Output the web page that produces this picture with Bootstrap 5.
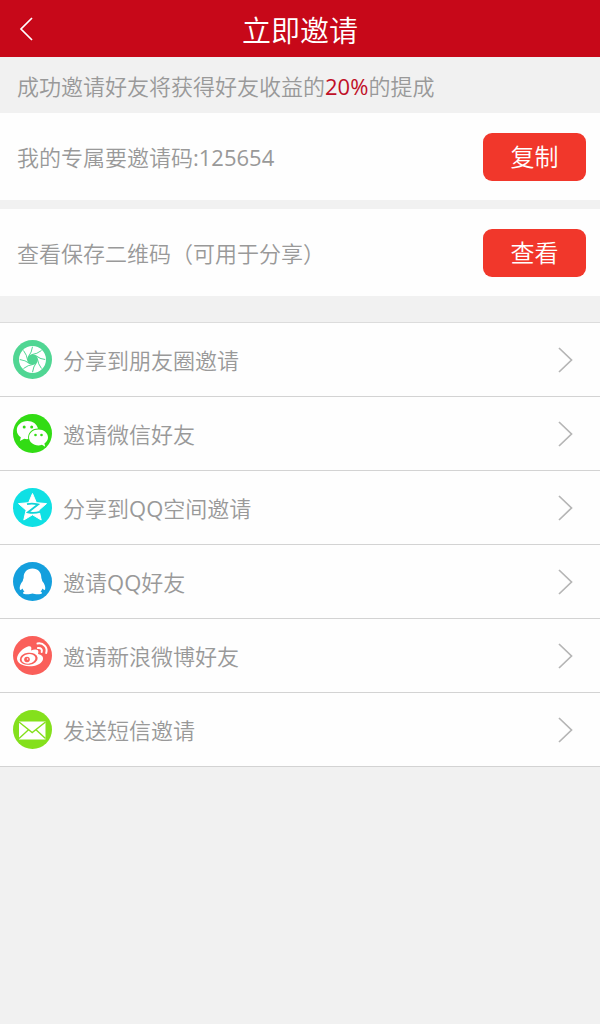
<!DOCTYPE html>
<html lang="zh-CN">
<head>
<meta charset="utf-8">
<meta name="viewport" content="width=device-width, initial-scale=1">
<title>立即邀请</title>
<link rel="stylesheet" href="https://cdn.jsdelivr.net/npm/bootstrap@5.3.0/dist/css/bootstrap.min.css">
<style>
body { background: #f1f1f1; color: #999; font: 350 22px/32px "Open Sans", "Noto Sans CJK SC", sans-serif; }
.topbar { background: #c70819; color: #fff; min-height: 57px; }
.topbar h1 { font-size: 29px; line-height: 40px; font-weight: 350; }
.back { width: 54px; height: 56px; }
.hint { padding: 13px 17px 11px; }
.hint strong { color: #c01028; }
.latin { font-weight: 400; }
.panel { background: #fefefe; min-height: 87px; padding: 0 14px 0 17px; }
.panel + .panel { margin-top: 9px; }
.btn-act { --bs-btn-bg: #f1372b; --bs-btn-color: #fff; --bs-btn-hover-bg: #d92c21; --bs-btn-hover-color: #fff; width: 103px; height: 48px; border: 0; border-radius: 9px; padding: 0; font-size: 24px; font-weight: 350; }
.share { border-top: 1px solid #dcdcdc; margin-top: 26px; }
.share a { background: #fefefe; color: #999; min-height: 74px; padding: 0 27px 0 13px; gap: 11px; border: solid #d3d3d3; border-width: 0 0 1px; border-radius: 0; }
.ico { width: 39px; height: 39px; flex: none; }
</style>
</head>
<body>
<header class="topbar d-flex align-items-center position-relative">
  <a class="back d-flex align-items-center position-absolute start-0" href="#" aria-label="返回">
    <svg width="54" height="56" fill="none" stroke="#fff" stroke-width="1.7"><path d="M32 17 21 28 32 39"/></svg>
  </a>
  <h1 class="m-0 w-100 text-center pt-1">立即邀请</h1>
</header>
<main>
  <p class="hint m-0">成功邀请好友将获得好友收益的<strong class="latin">20%</strong>的提成</p>
  <section class="panel d-flex align-items-center justify-content-between">
    <span>我的专属要邀请码<span class="latin">:125654</span></span>
    <button type="button" class="btn btn-act">复制</button>
  </section>
  <section class="panel d-flex align-items-center justify-content-between">
    <span>查看保存二维码（可用于分享）</span>
    <button type="button" class="btn btn-act">查看</button>
  </section>

  <nav class="share list-group rounded-0">
    <a href="#" class="list-group-item list-group-item-action d-flex align-items-center">
      <svg class="ico" viewBox="0 0 39 39"><circle cx="19.500" cy="19.500" r="19.500" fill="#50d693"/><circle cx="19.500" cy="19.500" r="13.500" fill="#fff"/><circle cx="19.500" cy="19.500" r="5.300" fill="#50d693"/>
        <g fill="none" stroke="#50d693" stroke-width="1"><path id="blade" d="M18.500 14.700Q24 14 28.500 10.500"/><use href="#blade" transform="rotate(45 19.500 19.500)"/><use href="#blade" transform="rotate(90 19.500 19.500)"/><use href="#blade" transform="rotate(135 19.500 19.500)"/><use href="#blade" transform="rotate(180 19.500 19.500)"/><use href="#blade" transform="rotate(225 19.500 19.500)"/><use href="#blade" transform="rotate(270 19.500 19.500)"/><use href="#blade" transform="rotate(315 19.500 19.500)"/></g></svg>
      <span class="flex-grow-1">分享到朋友圈邀请</span>
      <svg width="15" height="26" fill="none" stroke="#b5b5b5" stroke-width="1.700"><path d="M1 1 13.500 13 1 25"/></svg>
    </a>
    <a href="#" class="list-group-item list-group-item-action d-flex align-items-center">
      <svg class="ico" viewBox="0 0 39 39"><circle cx="19.500" cy="19.500" r="19.500" fill="#32dc14"/>
        <path fill="#fff" d="M14.500 7C8.500 7 3.800 11 3.800 16.200c0 3 1.600 5.500 4 7.100L7 27l4.200-2.200c1.200.3 2.700.4 4 .3C14.500 19 19 14.500 25 14.600 24 10 19.700 7 14.500 7z"/>
        <path fill="#fff" d="M25.500 15.600c-5.300 0-9.500 3.500-9.500 7.900s4.200 7.900 9.500 7.900c1.200 0 2.300-.2 3.400-.6l3.300 1.900-.8-3.200c2.200-1.500 3.600-3.600 3.600-6 0-4.400-4.200-7.900-9.500-7.900z"/>
        <g fill="#32dc14"><circle cx="11.200" cy="13" r="1.500"/><circle cx="18.700" cy="13" r="1.500"/><circle cx="22.500" cy="21" r="1.300"/><circle cx="28.500" cy="21" r="1.300"/></g></svg>
      <span class="flex-grow-1">邀请微信好友</span>
      <svg width="15" height="26" fill="none" stroke="#b5b5b5" stroke-width="1.700"><path d="M1 1 13.500 13 1 25"/></svg>
    </a>
    <a href="#" class="list-group-item list-group-item-action d-flex align-items-center">
      <svg class="ico" viewBox="0 0 39 39"><circle cx="19.500" cy="19.500" r="19.500" fill="#0fe0e4"/>
        <path fill="#fff" stroke="#fff" stroke-linejoin="round" d="M19.500 5.500 23.400 14.700 33.500 15.600 25.900 22.200 28.200 32 19.500 26.800 10.800 32 13.100 22.200 5.500 15.600 15.600 14.700z"/>
        <path fill="none" stroke="#0fd3d8" stroke-width="1.900" d="M14 16.200Q19 15 25 16.400L15 24.300Q21 25.600 27 23.800"/></svg>
      <span class="flex-grow-1">分享到<span class="latin">QQ</span>空间邀请</span>
      <svg width="15" height="26" fill="none" stroke="#b5b5b5" stroke-width="1.700"><path d="M1 1 13.500 13 1 25"/></svg>
    </a>
    <a href="#" class="list-group-item list-group-item-action d-flex align-items-center">
      <svg class="ico" viewBox="0 0 39 39"><circle cx="19.500" cy="19.500" r="19.500" fill="#149fdd"/>
        <path fill="#fff" d="M19.500 6.500c-5.600 0-8.800 4-8.800 8.700 0 1.600-.8 2-.9 3.800-2.300 2.500-3.500 6-3 8.200.3 1.300 1.600.6 2.800-.6.4 1.300 1 2.200 2 3-1.200.3-1.700 1-1.500 1.600.3 1.300 7 1.300 9.400.2 2.400 1.100 9.100 1.100 9.400-.2.200-.6-.3-1.300-1.500-1.600 1-.8 1.600-1.700 2-3 1.200 1.200 2.500 1.900 2.800.6.5-2.200-.7-5.700-3-8.200-.1-1.800-.9-2.200-.9-3.800 0-4.700-3.200-8.700-8.800-8.700z"/></svg>
      <span class="flex-grow-1">邀请<span class="latin">QQ</span>好友</span>
      <svg width="15" height="26" fill="none" stroke="#b5b5b5" stroke-width="1.700"><path d="M1 1 13.500 13 1 25"/></svg>
    </a>
    <a href="#" class="list-group-item list-group-item-action d-flex align-items-center">
      <svg class="ico" viewBox="0 0 39 39"><circle cx="19.500" cy="19.500" r="19.500" fill="#fa5f5a"/>
        <path fill="#fff" d="M15.500 10.300c2.300-.7 3.600.9 2.500 4.100 3.500-1.500 7.700-1.600 7.400 1.600-.1 1-.4 1.700-.3 2 4.400.9 5.900 3.600 4.500 6.500C27.700 28.300 22 30.500 16 30.300 9 30.100 4 27.100 4 22.600c0-5 6.800-11.200 11.500-12.300z"/>
        <ellipse cx="15.700" cy="22.800" rx="9" ry="6" fill="#fa5f5a" transform="rotate(-7 15.700 22.800)"/>
        <ellipse cx="15.500" cy="22.900" rx="7" ry="4.700" fill="#fff" transform="rotate(-10 15.500 22.900)"/>
        <circle cx="14" cy="23.500" r="2.800" fill="#fa5f5a"/><circle cx="14.500" cy="23" r=".8" fill="#fff"/>
        <path fill="none" stroke="#fff" stroke-width="2" stroke-linecap="round" d="M24.500 7.500c6-1 10.500 4 8.700 9.500M25 12c2.800-.4 4.500 1.600 3.700 4"/></svg>
      <span class="flex-grow-1">邀请新浪微博好友</span>
      <svg width="15" height="26" fill="none" stroke="#b5b5b5" stroke-width="1.700"><path d="M1 1 13.500 13 1 25"/></svg>
    </a>
    <a href="#" class="list-group-item list-group-item-action d-flex align-items-center">
      <svg class="ico" viewBox="0 0 39 39"><circle cx="19.500" cy="19.500" r="19.500" fill="#84e01c"/>
        <path fill="#fff" d="M6 11.500h26.500v18H6z"/>
        <path fill="none" stroke="#84e01c" stroke-width="1.400" d="M6 12 19.200 22.500 32.500 12M6 28.500 15.500 19.700M32.500 28.500 23 19.700"/></svg>
      <span class="flex-grow-1">发送短信邀请</span>
      <svg width="15" height="26" fill="none" stroke="#b5b5b5" stroke-width="1.700"><path d="M1 1 13.500 13 1 25"/></svg>
    </a>
  </nav>
</main>
<script src="https://cdn.jsdelivr.net/npm/bootstrap@5.3.0/dist/js/bootstrap.bundle.min.js"></script>
</body>
</html>
